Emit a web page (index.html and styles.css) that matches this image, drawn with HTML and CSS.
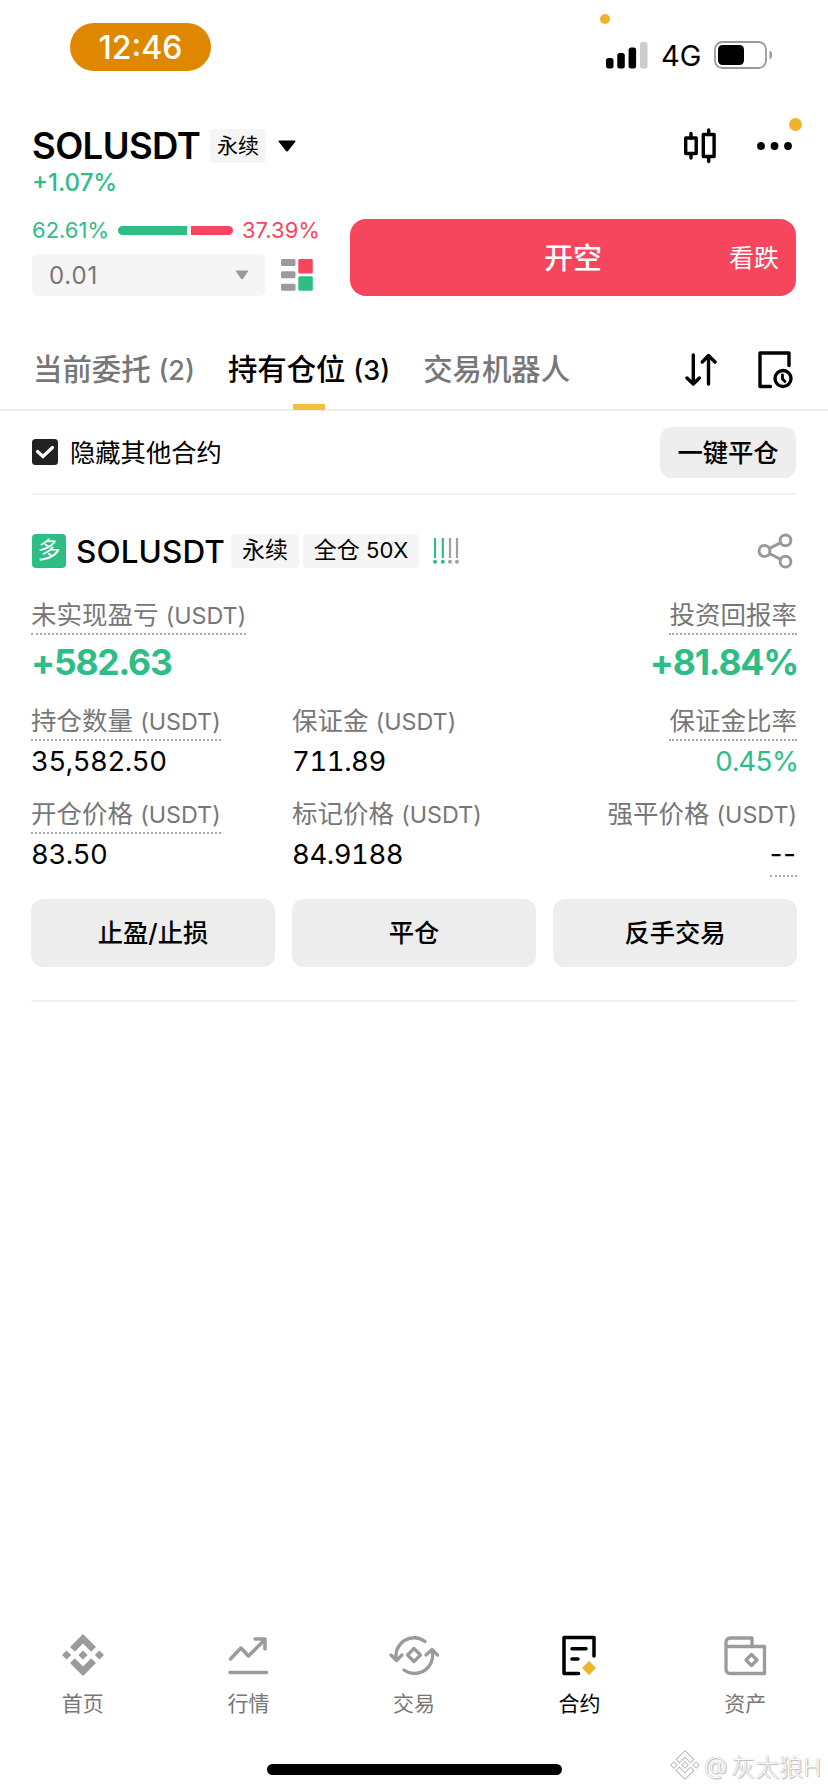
FILE: index.html
```html
<!DOCTYPE html>
<html lang="zh-CN">
<head>
<meta charset="utf-8">
<title>SOLUSDT 永续</title>
<link rel="stylesheet" href="styles.css">
</head>
<body>
<header class="status">
  <span class="clock">12:46</span>
  <i class="privacy-dot"></i>
  <div class="status-right">
    <svg class="signal" width="42" height="27" viewBox="0 0 42 27"><rect x="0" y="16" width="7.5" height="10.5" rx="2.5"/><rect x="11.3" y="11" width="7.5" height="15.500" rx="2.500"/><rect x="22.6" y="5.500" width="7.500" height="21" rx="2.500"/><rect x="34" y="0" width="7.500" height="26.500" rx="2.500" fill="#ccc"/></svg>
    <span class="network">4G</span>
    <svg class="battery" width="60" height="28" viewBox="0 0 60 28"><rect x="1" y="1" width="51" height="26" rx="7.500" fill="none" stroke="#999" stroke-width="1.800"/><rect x="4" y="4" width="26" height="20" rx="4.500"/><path d="M55.500 9.500c3.500 1.500 3.500 7.500 0 9z" fill="#999"/></svg>
  </div>
</header>

<section class="symbol-bar">
  <div class="symbol-main">
    <h1 class="symbol">SOLUSDT</h1>
    <span class="tag tag-head">永续</span>
    <svg class="caret" width="20" height="12" viewBox="0 0 20 12"><path d="M2 .5h16q1 .3.300 1.200L11 11q-1 1-2 0L1.700 1.700Q1 .8 2 .5z"/></svg>
  </div>
  <div class="symbol-tools">
    <svg width="32" height="36" viewBox="0 0 32 36" fill="none" stroke="#000" stroke-width="3.400" stroke-linecap="round" stroke-linejoin="round"><rect x="1.700" y="10" width="10.500" height="15.500"/><path d="M7 5.500V10M7 25.500v4.500"/><rect x="19.300" y="6.500" width="10.800" height="22"/><path d="M24.700 2v4.500M24.700 28.500v5"/></svg>
    <span class="more"><svg width="35" height="8" viewBox="0 0 35 8"><circle cx="4" cy="4" r="3.900"/><circle cx="17.500" cy="4" r="3.900"/><circle cx="31" cy="4" r="3.900"/></svg><i class="badge"></i></span>
  </div>
</section>
<p class="change">+1.07%</p>

<section class="order">
  <div class="order-left">
    <div class="ratio"><span class="up">62.61%</span><i class="ratio-buy"></i><i class="ratio-sell"></i><span class="down">37.39%</span></div>
    <div class="depth">
      <div class="step"><span>0.01</span><svg width="14" height="10" viewBox="0 0 14 10"><path d="M1.500.500h11q1 .3.500 1L8 8.800q-1 1-2 0L1 1.500Q.5.800 1.500.500z" fill="#999"/></svg></div>
      <svg width="32" height="32" viewBox="0 0 32 32"><g fill="#9b9b9b"><rect width="14.500" height="7" rx="1.500"/><rect y="12.300" width="14.500" height="7" rx="1.500"/><rect y="24.700" width="14.500" height="7" rx="1.500"/></g><rect x="17.300" width="14.500" height="14.500" rx="1.500" fill="#f6465d"/><rect x="17.300" y="17.300" width="14.500" height="14.500" rx="1.500" fill="#2ebd85"/></svg>
    </div>
  </div>
  <button class="sell"><span></span><span>开空</span><span class="sell-note">看跌</span></button>
</section>

<nav class="tabs">
  <a class="tab">当前委托 <span>(2)</span></a>
  <a class="tab tab-active">持有仓位 <span>(3)</span></a>
  <a class="tab">交易机器人</a>
  <div class="tab-tools">
    <svg width="32" height="34" viewBox="0 0 32 34" fill="none" stroke="#000" stroke-width="3.400" stroke-linecap="round" stroke-linejoin="round"><path d="M8.300 2v28M2 25l6.300 6 6-6M23.500 31V3M17.300 9l6.200-6.500 6.500 6.500"/></svg>
    <svg width="36" height="38" viewBox="0 0 36 38" fill="none" stroke="#000" stroke-width="3.400" stroke-linecap="round" stroke-linejoin="round"><path d="M12.500 35.500H2V2h29v12.500"/><circle cx="25" cy="27.500" r="8"/><path d="M24.500 24v4l2.500 2.500" stroke-width="2.800"/></svg>
  </div>
</nav>

<section class="filter">
  <label class="hide-others"><svg width="26" height="26" viewBox="0 0 26 26"><rect width="26" height="26" rx="3.500" fill="#222225"/><path d="M5.500 12.500l5.500 5 9.500-9" fill="none" stroke="#fff" stroke-width="3.200" stroke-linecap="round"/></svg><span>隐藏其他合约</span></label>
  <button class="close-all">一键平仓</button>
</section>

<article class="position">
  <div class="position-head">
    <span class="side">多</span>
    <h2 class="pair">SOLUSDT</h2>
    <span class="tag">永续</span>
    <span class="tag tag-wide">全仓 <span>50X</span></span>
    <svg class="risk" width="26" height="26" viewBox="0 0 26 26"><g fill="#2ebd85"><rect x=".9" width="2.200" height="20"/><rect x="8.700" width="2.200" height="20"/><circle cx="2" cy="23.800" r="2"/><circle cx="9.800" cy="23.800" r="2"/></g><g fill="#a0a0a0"><rect x="15.900" width="2.200" height="20"/><rect x="22.900" width="2.200" height="20"/><circle cx="17" cy="23.800" r="2"/><circle cx="24" cy="23.800" r="2"/></g></svg>
    <svg class="share" width="36" height="36" viewBox="0 0 36 36" fill="none" stroke="#999" stroke-width="3"><circle cx="7.500" cy="18" r="5.400"/><circle cx="28.500" cy="7.300" r="5.400"/><circle cx="28.500" cy="28.700" r="5.400"/><path d="M12.300 15.500l11.400-5.800M12.300 20.500l11.400 5.800"/></svg>
  </div>
  <div class="pnl">
    <div><div class="label dotted">未实现盈亏 <span>(USDT)</span></div><div class="big">+582.63</div></div>
    <div class="right"><div class="label dotted">投资回报率</div><div class="big">+81.84%</div></div>
  </div>
  <div class="grid">
    <div><div class="label dotted">持仓数量 <span>(USDT)</span></div><div class="value">35,582.50</div></div>
    <div><div class="label">保证金 <span>(USDT)</span></div><div class="value">711.89</div></div>
    <div class="right"><div class="label dotted">保证金比率</div><div class="value up">0.45%</div></div>
    <div><div class="label dotted">开仓价格 <span>(USDT)</span></div><div class="value">83.50</div></div>
    <div><div class="label">标记价格 <span>(USDT)</span></div><div class="value">84.9188</div></div>
    <div class="right"><div class="label">强平价格 <span>(USDT)</span></div><div class="value none">--</div></div>
  </div>
  <div class="actions"><button>止盈/止损</button><button>平仓</button><button>反手交易</button></div>
</article>

<footer class="bottom">
  <nav class="nav">
    <a><svg width="44" height="44" viewBox="0 0 44 44" fill="#9b9b9b"><path d="M22 1l13 13-4.800 4.800-8.200-8.200-8.200 8.200L9 14zM22 43l13-13-4.800-4.800-8.200 8.200-8.200-8.200L9 30zM1 22l4.600-4.600L10.200 22l-4.600 4.600zM33.800 22l4.600-4.600L43 22l-4.600 4.600zM17.400 22l4.600-4.600 4.600 4.600-4.600 4.600z"/></svg>首页</a>
    <a><svg width="44" height="44" viewBox="0 0 44 44" fill="none" stroke="#9b9b9b" stroke-width="3.500" stroke-linecap="round" stroke-linejoin="round"><path d="M4.500 26L15 15l7.500 8L38 7.500M29 6h10v10M4 39.500h36.500"/></svg>行情</a>
    <a><svg width="50" height="44" viewBox="0 0 50 44" fill="none" stroke="#9b9b9b" stroke-width="3.300" stroke-linecap="round" stroke-linejoin="round"><path d="M36 8.500A18 18 0 0 0 7.500 27M2 22l5.500 5.500L13 22M15 37A18 18 0 0 0 43 18M37 22l6-5.500 5.500 5.500"/><path d="M25 15.500l6.500 6.500-6.500 6.500-6.500-6.500z"/></svg>交易</a>
    <a class="active"><svg width="44" height="44" viewBox="0 0 44 44" fill="none" stroke="#000" stroke-width="3.500" stroke-linecap="round" stroke-linejoin="round"><path d="M20.500 40.500H6v-36h30v18.500M14 15.700h14M14 26h6"/><path d="M31 28l7 7-7 7-7-7z" fill="#f0b428" stroke="none"/></svg>合约</a>
    <a><svg width="44" height="44" viewBox="0 0 44 44" fill="none" stroke="#9b9b9b" stroke-width="3.300" stroke-linecap="round" stroke-linejoin="round"><path d="M3 13V36q0 4.500 4.500 4.500h34v-27H3V9.500Q3 5 7.500 5H29v8"/><path d="M28.500 21.500l5.500 5.500-5.500 5.500L23 27z"/></svg>资产</a>
  </nav>
  <div class="home-indicator"></div>
  <div class="watermark"><svg width="30" height="30" viewBox="0 0 44 44" fill="#fff" stroke="#bbb" stroke-width="1.500"><path d="M22 1l13 13-4.800 4.800-8.200-8.200-8.200 8.200L9 14zM22 43l13-13-4.800-4.800-8.200 8.200-8.200-8.200L9 30zM1 22l4.600-4.600L10.200 22l-4.600 4.600zM33.800 22l4.600-4.600L43 22l-4.600 4.600zM17.400 22l4.600-4.600 4.600 4.600-4.600 4.600z"/></svg><span>@</span><span>灰太狼H</span></div>
</footer>
</body>
</html>
```
FILE: styles.css
```css
* { box-sizing: border-box; }
html, body, h1, h2, p { margin: 0; }
body {
  width: 828px; height: 1792px; overflow: hidden; background: #fff; color: #000;
  display: flex; flex-direction: column; position: relative;
  font-family: Inter, "Noto Sans CJK SC", sans-serif; white-space: nowrap;
}
svg { display: block; flex: none; }
button { border: 0; padding: 0; font: inherit; color: inherit; }
.up { color: #2ebd85; }
.down { color: #f6465d; }

.status { height: 112px; display: flex; justify-content: space-between; align-items: flex-start; padding: 23px 54px 0 70px; }
.clock { width: 141px; height: 48px; border-radius: 24px; background: #e08700; color: #fff; font-size: 32px; font-weight: 500; line-height: 49px; text-align: center; }
.privacy-dot { position: absolute; left: 600px; top: 14px; width: 10px; height: 10px; border-radius: 50%; background: #f0b22a; }
.status-right { display: flex; align-items: center; height: 30px; margin-top: 17px; }
.network { font-size: 29px; font-weight: 400; width: 40px; margin: 0 13px; line-height: 32px; padding-top: 2px; }

.symbol-bar { height: 68px; padding: 0 32px; display: flex; justify-content: space-between; align-items: center; }
.symbol-main { display: flex; align-items: center; }
.symbol { font-size: 36.500px; font-weight: 600; line-height: 40px; width: 178px; letter-spacing: -.600px; }
.tag { height: 34px; border-radius: 4px; background: #f5f5f5; line-height: 33px; font-size: 23px; text-align: center; width: 68px; }
.tag-head { width: 56px; font-size: 21px; }
.caret { margin-left: 11px; }
.symbol-tools { display: flex; align-items: center; gap: 41px; }
.more { position: relative; padding-right: 4px; }
.badge { position: absolute; right: -6px; top: -24px; width: 13px; height: 13px; border-radius: 50%; background: #f0b22a; }
.change { height: 32px; line-height: 6px; padding: 0 32px; font-size: 24px; font-weight: 500; color: #2ebd85; }

.order { padding: 7px 32px 0; height: 84px; display: flex; justify-content: space-between; flex: none; }
.order-left { width: 286px; }
.ratio { display: flex; align-items: center; height: 23px; font-size: 22px; }
.ratio span { width: 76px; line-height: 20px; padding-bottom: 2px; }
.ratio-buy { width: 69px; height: 9px; border-radius: 5px 0 0 5px; background: #2ebd85; margin: 0 4px 0 10px; }
.ratio-sell { width: 42px; height: 9px; border-radius: 0 5px 5px 0; background: #f6465d; margin-right: 9px; }
.depth { display: flex; align-items: center; gap: 16px; margin-top: 12px; }
.step { width: 233px; height: 42px; border-radius: 5px; background: #f5f5f5; color: #777; font-size: 24px; letter-spacing: .800px; display: flex; align-items: center; justify-content: space-between; padding: 0 16px 0 17px; }
.sell { width: 446px; height: 77px; padding-bottom: 4px; border-radius: 16px; background: #f6465d; color: #fff; font-size: 29px; font-weight: 500; display: grid; grid-template-columns: 1fr auto 1fr; align-items: center; }
.sell-note { font-size: 25px; font-weight: 400; text-align: right; padding-right: 17px; }

.tabs { margin-top: 34px; height: 81px; border-bottom: 2px solid #eee; padding: 0 34px 0 33px; display: flex; font-size: 29.400px; font-weight: 500; line-height: 79px; color: #777; }
.tab { margin-right: 33px; position: relative; }
.tab span { font-size: 27px; }
.tab-active { color: #000; }
.tab-active::after { content: ""; position: absolute; left: 50%; bottom: -1px; width: 32px; height: 6px; margin-left: -16px; background: #f3c03c; border-radius: 1px; }
.tab-tools { margin-left: auto; display: flex; gap: 41px; align-items: center; }

.filter { margin: 0 32px; height: 84px; border-bottom: 2px solid #f2f2f2; display: flex; justify-content: space-between; align-items: center; }
.hide-others { display: flex; align-items: center; gap: 12px; font-size: 25.300px; }
.hide-others span { padding-bottom: 3px; }
.close-all { width: 136px; height: 51px; padding-bottom: 3px; border-radius: 12px; background: #ededed; font-size: 25.300px; font-weight: 500; }

.position { margin: 0 31px; height: 507px; border-bottom: 2px solid #f2f2f2; }
.position-head { display: flex; align-items: center; height: 36px; margin: 38px 4px 0 1px; }
.side { width: 34px; height: 34px; border-radius: 4px; background: #2ebd85; color: #fff; text-align: center; font-size: 23px; line-height: 33px; }
.pair { font-size: 31.500px; font-weight: 500; width: 155px; margin-left: 10px; line-height: 34px; padding-top: 2px; letter-spacing: .100px; }
.position-head .tag { margin-right: 4px; }
.position-head .tag-wide { width: 116px; margin-right: 14px; }
.tag-wide span { font-size: 22px; }
.share { margin-left: auto; }
.pnl { display: flex; justify-content: space-between; height: 106px; margin-top: 28px; }
.right { display: flex; flex-direction: column; align-items: flex-end; }
.label { width: max-content; height: 38px; line-height: 35px; font-size: 25.500px; color: #777; }
.label span { font-size: 23.300px; }
.dotted { border-bottom: 2px dotted #a8a8a8; }
.big { color: #2ebd85; font-size: 35.500px; font-weight: 700; line-height: 55px; letter-spacing: -1.200px; }
.right .big { margin-right: -1px; }
.grid { display: grid; grid-template-columns: 261px 261px 1fr; grid-auto-rows: 93px; height: 196px; }
.value { font-size: 27.500px; line-height: 41px; font-variant-numeric: tabular-nums; letter-spacing: -.450px; }
.value.up { letter-spacing: -1px; margin-right: -1px; }
.none { border-bottom: 2px dotted #a8a8a8; height: 43px; font-variant-numeric: normal; letter-spacing: 1px; }
.actions { display: grid; grid-template-columns: repeat(3, 1fr); gap: 17px; }
.actions button { height: 68px; padding-bottom: 4px; border-radius: 12px; background: #ededed; font-size: 25.300px; font-weight: 500; }

.bottom { margin-top: auto; height: 163px; flex: none; position: relative; }
.nav { display: grid; grid-template-columns: repeat(5, 1fr); height: 135px; }
.nav a { display: flex; flex-direction: column; align-items: center; gap: 13px; padding-top: 4px; color: #777; font-size: 21px; line-height: 28px; }
.nav .active { color: #000; }
.home-indicator { width: 295px; height: 11px; border-radius: 6px; background: #000; margin: 0 auto; }
.watermark { position: absolute; right: 7px; top: 120px; display: flex; align-items: center; height: 32px; gap: 4px; color: #fafafa; font-size: 24px; font-weight: 300; text-shadow: 0 0 1px #999, 1px 1px 1px #bbb; }
```
